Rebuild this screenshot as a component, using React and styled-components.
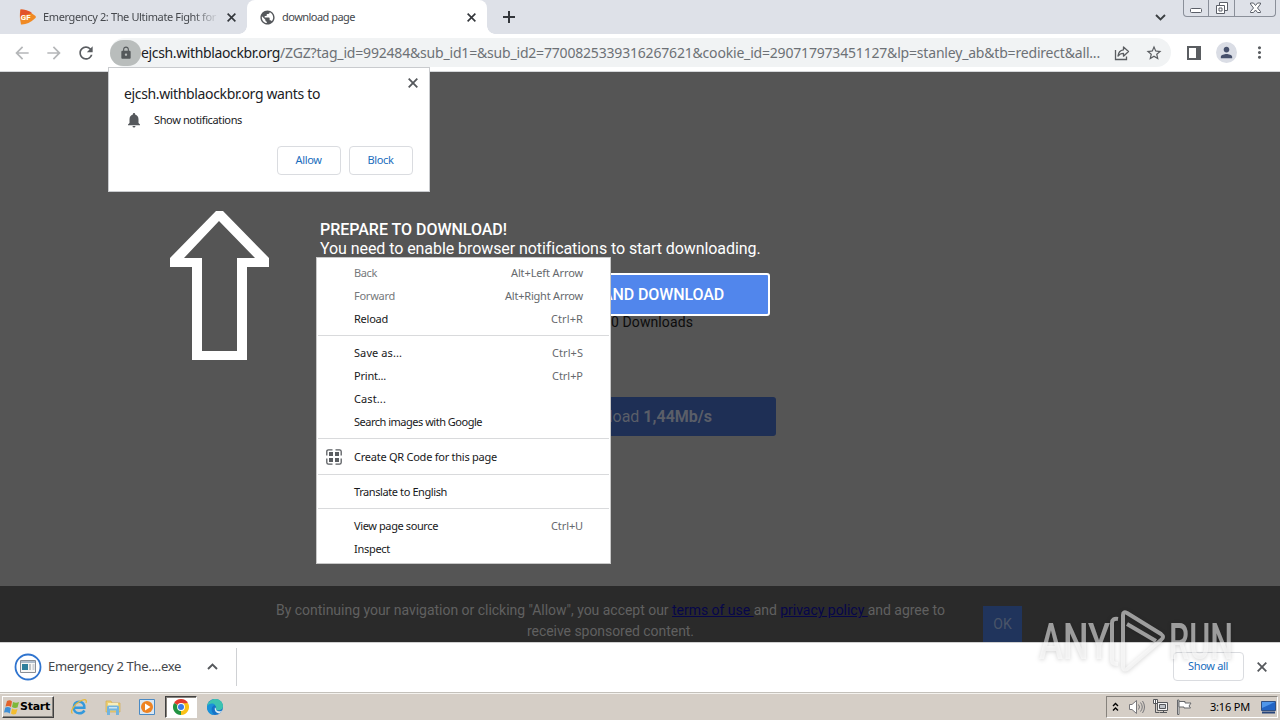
import React, { useLayoutEffect, useRef } from "react"
import styled, { createGlobalStyle, css } from "styled-components"
import {
  MdArrowBack,
  MdArrowForward,
  MdLock,
  MdMoreVert,
  MdNotifications,
  MdPerson,
  MdPublic,
  MdRefresh,
  MdStarBorder,
} from "react-icons/md"

const uiFont = `"Noto Sans", "DejaVu Sans", sans-serif`
const pageFont = `Roboto, "Liberation Sans", sans-serif`

const GlobalStyle = createGlobalStyle`
  * {
    box-sizing: border-box;
  }
  body {
    margin: 0;
    overflow: hidden;
    font-family: ${uiFont};
    font-size: 11px;
    color: #202124;
  }
  svg {
    display: block;
    flex: none;
  }
`

const Screen = styled.div`
  position: relative;
  display: flex;
  flex-direction: column;
  width: 1280px;
  height: 720px;
  overflow: hidden;
`

/* Tab strip */

const TabStrip = styled.header`
  display: flex;
  height: 34px;
  background: #dee1e8;
`

const Tab = styled.div`
  position: relative;
  display: flex;
  align-items: center;
  width: ${props => (props.$active ? 240 : 247)}px;
  padding: 0 11px 0 ${props => (props.$active ? 12 : 19)}px;
  color: #45484d;

  ${props =>
    props.$active &&
    css`
      background: #fff;
      border-radius: 8px 8px 0 0;

      &::before,
      &::after {
        content: "";
        position: absolute;
        bottom: 0;
        width: 8px;
        height: 8px;
      }
      &::before {
        left: -8px;
        background: radial-gradient(circle at 0 0, transparent 7.5px, #fff 8px);
      }
      &::after {
        right: -8px;
        background: radial-gradient(
          circle at 100% 0,
          transparent 7.5px,
          #fff 8px
        );
      }
    `}
`

const TabTitle = styled.div`
  flex: 1;
  margin-left: ${props => props.$gap}px;
  overflow: hidden;
  line-height: 18px;
  ${props =>
    props.$fade &&
    css`
      mask-image: linear-gradient(90deg, #000 150px, transparent 176px);
    `}
`

const NewTab = styled.div`
  display: flex;
  flex: 1;
  align-items: center;
  padding-left: 16px;
`

const TabSearch = styled.div`
  display: flex;
  align-items: center;
  margin-right: 17px;
`

const WindowButtons = styled.div`
  display: flex;
  width: 93px;
  height: 17px;
  margin-right: 4px;
  border: 1px solid #8a8f99;
  border-top: 0;
  border-radius: 0 0 4px 4px;
`

const WindowButton = styled.div`
  display: flex;
  justify-content: center;
  width: ${props => props.$width}px;
  & + & {
    border-left: 1px solid #8a8f99;
  }
`

/* Toolbar */

const Toolbar = styled.div`
  display: flex;
  align-items: center;
  height: 38px;
  padding-left: 12px;
  background: #fff;
  border-bottom: 1px solid #d5d7da;
`

const ToolButton = styled.div`
  display: flex;
  flex: none;
  align-items: center;
  justify-content: center;
  width: 20px;
  margin-right: ${props => props.$gap || 0}px;
  color: ${props => (props.$disabled ? "#b5b7b9" : "#5a5d61")};
`

const AddressBar = styled.div`
  display: flex;
  flex: none;
  align-items: center;
  width: 1061px;
  height: 29px;
  margin-right: 13px;
  border-radius: 14.5px;
  background: #f1f3f4;
`

const SiteChip = styled.div`
  display: flex;
  align-items: center;
  justify-content: center;
  width: 31px;
  height: 26px;
  border-radius: 13px;
  background: #b9bdbc;
  color: #54585a;
`

const Url = styled.div`
  display: flex;
  flex: 1;
  font-size: 14px;
  line-height: 20px;
  color: #6d7176;
`

const Host = styled.span`
  color: #202124;
`

const Avatar = styled.div`
  display: flex;
  flex: none;
  align-items: center;
  justify-content: center;
  width: 21px;
  height: 21px;
  margin: 0 12px;
  border-radius: 50%;
  background: #dadde5;
  color: #46506b;
`

/* Web page */

const Page = styled.main`
  display: flex;
  flex: 1;
  align-items: flex-start;
  padding: 139px 0 0 170px;
  background: #555;
  font-family: ${pageFont};
  font-size: 16px;
`

const Prompt = styled.section`
  width: 456px;
  margin: 9px 0 0 51px;
  color: #fff;
  line-height: 19px;
`

const PromptTitle = styled.div`
  font-weight: 500;
`

const AllowButton = styled.div`
  display: flex;
  align-items: center;
  justify-content: flex-end;
  width: 450px;
  height: 43px;
  margin-top: 15px;
  padding-right: 44px;
  border: 2px solid #fff;
  border-radius: 3px;
  background: #5186ec;
  font-weight: 500;
`

const DownloadCount = styled.div`
  margin-top: -3px;
  padding-right: 83px;
  color: #0c0c0c;
  font-size: 14px;
  text-align: right;
`

const SpeedButton = styled.div`
  display: flex;
  align-items: center;
  justify-content: flex-end;
  height: 39px;
  margin-top: 65px;
  padding-right: 64px;
  border-radius: 3px;
  background: #1e2f55;
  color: #5a5e68;
  white-space: pre;

  b {
    font-weight: 700;
  }
`

const CookieBar = styled.div`
  display: flex;
  height: 56px;
  padding: 14px 0 0 270px;
  overflow: hidden;
  background: #2a2a2a;
  color: #606060;
  font-family: ${pageFont};
  font-size: 14px;
`

const CookieText = styled.div`
  display: flex;
  flex-direction: column;
  align-items: center;
  width: 681px;
  line-height: 21px;

  a {
    color: #06064a;
    text-decoration: underline;
    white-space: pre;
  }
`

const CookieOk = styled.div`
  width: 39px;
  height: 40px;
  margin: 6px 0 0 32px;
  background: #20345c;
  color: #4a5468;
  line-height: 37px;
  text-align: center;
`

/* Downloads */

const Shelf = styled.footer`
  display: flex;
  align-items: center;
  height: 50px;
  padding: 0 0 2px 14px;
  background: #fff;
  border-top: 1px solid #d0d0d0;
`

const DownloadItem = styled.div`
  display: flex;
  align-items: center;
  width: 223px;
  height: 38px;
  border-right: 1px solid #cfd1d4;
  color: #45484c;
  font-size: 13px;
`

const FileName = styled.div`
  width: 133px;
  margin: 0 26px 1px 6px;
`

const ShelfActions = styled.div`
  display: flex;
  flex: 1;
  align-items: center;
  justify-content: flex-end;
  gap: 13px;
  padding-right: 13px;
`

const OutlineButton = styled.div`
  display: flex;
  align-items: center;
  justify-content: center;
  width: ${props => props.$width}px;
  height: 29px;
  padding: 0 1px 3px 0;
  border: 1px solid #dadce0;
  border-radius: 4px;
  color: #1a6dbd;
`

/* Taskbar */

const Taskbar = styled.div`
  display: flex;
  align-items: center;
  height: 28px;
  padding: 0 2px;
  border-top: 1px solid #c4c1bb;
  box-shadow: inset 0 1px #f4f2ee;
  background: #d5cec6;
`

const StartButton = styled.div`
  display: flex;
  align-items: center;
  width: 52px;
  height: 22px;
  margin-right: 9px;
  padding-left: 1px;
  border: 1px solid;
  border-color: #fff #404040 #404040 #fff;
  box-shadow: inset -1px -1px #86827c;
  color: #000;
  font-family: "DejaVu Sans", sans-serif;
  font-size: 11px;
  font-weight: 700;
`

const TaskButton = styled.div`
  display: flex;
  align-items: center;
  justify-content: center;
  width: 32px;
  height: 22px;
  margin-right: 2px;
  ${props =>
    props.$active &&
    css`
      border: 1px solid;
      border-color: #404040 #fff #fff #404040;
      box-shadow: inset 1px 1px #86827c;
      background: #fff;
    `}
`

const Tray = styled.div`
  display: flex;
  align-items: center;
  width: 172px;
  height: 22px;
  margin-left: auto;
  border: 1px solid;
  border-color: #86827c #fff #fff #86827c;
  color: #000;
`

const TraySlot = styled.div`
  margin-left: ${props => props.$gap}px;
`

/* Things that float above the browser */

const PermissionPopup = styled.div`
  position: absolute;
  top: 67px;
  left: 108px;
  width: 322px;
  height: 125px;
  padding: 17px 16px 0 15px;
  border: 1px solid #c9cbce;
  background: #fff;
`

const PopupTitle = styled.div`
  height: 20px;
  font-size: 14px;
  line-height: 18px;
`

const PopupClose = styled.div`
  position: absolute;
  top: 10px;
  right: 11px;
`

const PopupRow = styled.div`
  display: flex;
  align-items: center;
  height: 30px;
  gap: 11px;
  padding-left: 1px;

  svg {
    color: #55585c;
  }
  span {
    margin-bottom: 2px;
  }
`

const PopupButtons = styled.div`
  display: flex;
  justify-content: flex-end;
  gap: 8px;
  margin-top: 11px;
`

const Menu = styled.div`
  position: absolute;
  top: 257px;
  left: 316px;
  width: 295px;
  padding: 3px 0;
  border: 1px solid #c8c8c8;
  background: #fff;
`

const MenuItem = styled.div`
  display: flex;
  align-items: center;
  height: ${props => (props.$icon ? 25 : 23)}px;
  padding-right: 27px;
  color: ${props => (props.$disabled ? "#76787b" : "#18191b")};
`

const MenuIcon = styled.div`
  width: 37px;
  padding-left: 9px;
`

const Shortcut = styled.span`
  margin-left: auto;
  color: #66696d;
`

const Separator = styled.div`
  height: 1px;
  margin: 5px 1px;
  background: #d9dadc;
`

const Watermark = styled.svg`
  position: absolute;
  top: 604px;
  left: 1030px;
  filter: drop-shadow(0 1px 2px rgba(0, 0, 0, 0.3));
`

const Fitted = styled.span`
  display: inline-block;
  white-space: pre;
`

// Spreads the letters so that the label takes the given width.
const Fit = ({ width, children }) => {
  const ref = useRef(null)
  useLayoutEffect(() => {
    const el = ref.current
    el.style.letterSpacing = "0px"
    const natural = el.getBoundingClientRect().width
    el.style.letterSpacing = `${(width - natural) / el.textContent.length}px`
  }, [width, children])
  return <Fitted ref={ref}>{children}</Fitted>
}

const Cross = ({ size = 10, color = "#55585c" }) => (
  <svg width={size} height={size} viewBox="0 0 10 10" stroke={color} strokeWidth="1.8">
    <path d="m.7.7 8.600 8.600M9.300.7.7 9.300" />
  </svg>
)

const Plus = () => (
  <svg width="12" height="12" viewBox="0 0 12 12" stroke="#33363b" strokeWidth="2">
    <path d="M6 0v12M0 6h12" />
  </svg>
)

const Chevron = ({ up, color = "#3c4043" }) => (
  <svg width="11" height="7" viewBox="0 0 11 7" fill="none" stroke={color} strokeWidth="1.900">
    <path d={up ? "m1 6 4.500-4.500L10 6" : "m1 1 4.500 4.500L10 1"} />
  </svg>
)

const GameFavicon = () => (
  <svg width="18" height="18" viewBox="0 0 18 18">
    <path d="M1.500 1.500Q8 1 16.500 8q.8 1 0 2Q9 17 2 16.500Q0 8 1.500 1.500z" fill="#f08a24" />
    <path d="M1.500 1.500Q8 1 13 5L1 9z" fill="#e2522b" />
    <text x="1.800" y="12" fill="#fff" fontFamily="Roboto" fontSize="8" fontWeight="700">
      GF
    </text>
  </svg>
)

const ShareIcon = () => (
  <svg width="18" height="18" viewBox="0 0 18 18" fill="none" stroke="#5a5d61" strokeWidth="1.300">
    <path d="M2.500 6v9.500h11V12.500" />
    <path d="M10.500 3v2.800C7 6.300 5.300 8.500 5 12c1.400-1.900 3-2.700 5.500-2.700v2.900L15.500 7.500z" strokeLinejoin="round" />
  </svg>
)

const PanelIcon = () => (
  <svg width="14" height="14" viewBox="0 0 14 14">
    <path fill="#5a5d61" fillRule="evenodd" d="M0 0h14v14H0zM2 2v10h7V2z" />
  </svg>
)

const MinimizeGlyph = () => (
  <svg width="13" height="14" viewBox="0 0 13 14">
    <rect x=".5" y="8.500" width="11" height="4" rx="1" fill="#fff" stroke="#5b5f68" />
  </svg>
)

const RestoreGlyph = () => (
  <svg width="14" height="15" viewBox="0 0 14 15" fill="#fff" stroke="#5b5f68">
    <path d="M4.500 2.500h8v8h-8z" />
    <path d="M1.500 5.500h8v8h-8z" />
    <path d="M4 8h3v3H4z" />
  </svg>
)

const CloseGlyph = () => (
  <svg width="13" height="15" viewBox="0 0 13 15">
    <path
      d="M1.500 3h3l2 2.500 2-2.500h3v1L8.500 8l3 3.500v1h-3l-2-2.500-2 2.500h-3v-1l3-3.500-3-4z"
      fill="#fff"
      stroke="#5b5f68"
    />
  </svg>
)

const UpArrow = () => (
  <svg width="99" height="149" viewBox="0 0 99 149">
    <path
      fill="#fff"
      fillRule="evenodd"
      d="M46 0h7l46 47v9H77v93H22V56H0v-9zM49 10 14 47h18v93h35V47h18z"
    />
  </svg>
)

const QrIcon = () => (
  <svg width="16" height="16" viewBox="0 0 16 16">
    <path
      fill="none"
      stroke="#5a5d61"
      strokeWidth="1.300"
      d="M6.500.8H2.500Q.8.8.8 2.500v4M9.500.8h4q1.700 0 1.700 1.700v4M.8 9.500v4q0 1.700 1.700 1.700h4M15.200 9.500v4q0 1.700-1.700 1.700h-4"
    />
    <path fill="#5a5d61" d="M3 3h4v4H3zM9 3h4v4H9zM3 9h4v4H3zM9 9h4v4H9z" />
  </svg>
)

const ExeIcon = () => (
  <svg width="28" height="28" viewBox="0 0 28 28">
    <circle cx="14" cy="14" r="12.500" fill="#fff" stroke="#2f74cf" strokeWidth="1.800" />
    <path d="M6.500 7.500h15v12h-15z" fill="#f7f7f5" stroke="#8a8f96" />
    <path d="M7 8h14v2H7z" fill="#aebccb" />
    <path d="M8 11h6v6H8z" fill="#2f7f9d" />
    <path d="M15 12h2M15 14h2M15 16h2" stroke="#8a8f96" />
    <path d="M18.500 11h2v6h-2z" fill="#ccd1d6" />
  </svg>
)

const WindowsFlag = () => (
  <svg width="16" height="16" viewBox="0 0 16 16">
    <path d="M3 2q3-1.500 5 .5L7 8Q5 6.500 1.500 7.500z" fill="#e2622b" />
    <path d="M9 3q3 1.500 6 0l-1.500 5.500Q10.500 9.500 8 8z" fill="#7db83a" />
    <path d="M1.300 8.500q3-1 5.500.5l-1 5.500Q3.500 12.500 0 13.500z" fill="#3f8fd6" />
    <path d="M8 9.500q2.500 1.500 5.500.5L12 15q-3 1-5-.5z" fill="#f4bd2f" />
  </svg>
)

const IeIcon = () => (
  <svg width="18" height="18" viewBox="0 0 18 18" fill="none">
    <path d="M14.500 12.500Q12.500 15.500 9 15.300C5.500 15 3.600 12.500 3.700 9.500 3.900 6 6 3.700 9.200 3.700c3.300 0 5.300 2.500 5.200 6H5" stroke="#3399dc" strokeWidth="2.400" />
    <path d="M2.500 15.500C-.5 14 4 6.500 9.500 3.500 14 1 17.500.8 16 5" stroke="#e5b93c" strokeWidth="1.300" />
  </svg>
)

const ExplorerIcon = () => (
  <svg width="18" height="18" viewBox="0 0 18 18">
    <path d="M2 3h5l1 2h8v9H2z" fill="#edcf72" stroke="#d2ad50" strokeWidth=".7" />
    <path d="M4 5h10v4H4z" fill="#f9eeb9" />
    <path d="M3 9q0-1.500 1.500-1.500h9Q15 7.500 15 9v8h-3v-4.500H6V17H3z" fill="#72b4de" />
    <path d="M5 9h8v1.500H5z" fill="#c6e5f5" />
  </svg>
)

const PlayerIcon = () => (
  <svg width="18" height="18" viewBox="0 0 18 18">
    <path d="M1.500 1.500h15v15h-15z" fill="#d9e7f3" stroke="#4a8ac4" />
    <circle cx="9" cy="9" r="6" fill="#ee8322" />
    <path d="m7 5.500 5.500 3.500L7 12.500z" fill="#fff" />
  </svg>
)

const ChromeIcon = () => (
  <svg width="16" height="16" viewBox="0 0 16 16">
    <path d="M8 8 1.070 4A8 8 0 0 1 14.930 4z" fill="#e33b2e" />
    <path d="M8 8 14.930 4A8 8 0 0 1 8 16z" fill="#fbc116" />
    <path d="M8 8v8A8 8 0 0 1 1.070 4z" fill="#229342" />
    <path d="M8 4.200h6.900L8 16l3.400-6z" fill="#fbc116" />
    <circle cx="8" cy="8" r="3.900" fill="#fff" />
    <circle cx="8" cy="8" r="3" fill="#3a7be8" />
  </svg>
)

const EdgeIcon = () => (
  <svg width="18" height="18" viewBox="0 0 18 18">
    <circle cx="9" cy="9" r="8" fill="#1572c8" />
    <path d="M1 8.500C2 3 6 1 9.500 1 14 1 17 4.500 17 8c0 3-2.300 4.200-4.500 4.200-1.500 0-2.700-.5-2.500-1.300.8-2.500-1-4.400-3.500-4.400C4 6.500 2 7.500 1 8.500z" fill="#3cc3b0" />
    <path d="M1 8.500C2.500 5.500 7 4.500 9 7 5 8 4.500 13 8 16.800 4 17 .6 13.500 1 8.500z" fill="#1a92d9" />
    <path d="M10 10.800c-.2 2.800 3.500 3 6.300 1.600-.7 1.200-1.800 2.400-3 3.200C10 15.200 8 12.500 9 9.300z" fill="#dcecf2" />
  </svg>
)

const TrayChevrons = () => (
  <svg width="7" height="10" viewBox="0 0 7 10" fill="none" stroke="#000" strokeWidth="1.400">
    <path d="m1 4 2.500-2.500L6 4M1 8.500 3.500 6 6 8.500" />
  </svg>
)

const SpeakerIcon = () => (
  <svg width="17" height="16" viewBox="0 0 17 16" stroke="#77777a" fill="none">
    <path d="M1.500 5.500H4L8.500 1.500v13L4 10.500H1.500z" fill="#fff" />
    <path d="M10.500 5.500q2 2.500 0 5M12.500 3.500q3.500 4.500 0 9M14.500 2q4 6 0 12" />
  </svg>
)

const NetworkIcon = () => (
  <svg width="17" height="16" viewBox="0 0 17 16" stroke="#55575a">
    <path d="M5.500 3.500h10v8h-10z" fill="#f5f5f5" />
    <path d="M7.500 5.500h6v4h-6z" fill="#bfc3c8" />
    <path d="M1.500.5h4v4h-4z" fill="#fff" />
    <path d="M8 13.500h7M11.500 11.500v2M3.500.5v4M3.500 4.500v9h4" fill="none" />
  </svg>
)

const FlagIcon = () => (
  <svg width="17" height="16" viewBox="0 0 17 16" stroke="#66686b">
    <path d="M1.500 1v14.500h1.500V1z" fill="#fff" />
    <path d="M3 2.500h6v1.500h6l-2 3 1.500 2H8V8H3z" fill="#fff" />
  </svg>
)

const DesktopIcon = () => (
  <svg width="15" height="14" viewBox="0 0 15 14">
    <path d="M.5 1.500h14v9H.5z" fill="#2264c4" stroke="#305084" />
    <path d="M1 2h13L1 8z" fill="#4f96ea" />
    <path d="M1 11.500h13v2H1z" fill="#27457a" />
  </svg>
)

const menuGroups = [
  [
    { label: "Back", width: 23, keys: "Alt+Left Arrow", keysWidth: 72, disabled: true },
    { label: "Forward", width: 41, keys: "Alt+Right Arrow", keysWidth: 78, disabled: true },
    { label: "Reload", width: 34, keys: "Ctrl+R", keysWidth: 32 },
  ],
  [
    { label: "Save as...", width: 48, keys: "Ctrl+S", keysWidth: 31 },
    { label: "Print...", width: 32, keys: "Ctrl+P", keysWidth: 31 },
    { label: "Cast...", width: 32 },
    { label: "Search images with Google", width: 128 },
  ],
  [{ label: "Create QR Code for this page", width: 143, icon: <QrIcon /> }],
  [{ label: "Translate to English", width: 93 }],
  [
    { label: "View page source", width: 84, keys: "Ctrl+U", keysWidth: 32 },
    { label: "Inspect", width: 36 },
  ],
]

const ContextMenu = () => (
  <Menu>
    {menuGroups.map((group, i) => (
      <React.Fragment key={group[0].label}>
        {i > 0 && <Separator />}
        {group.map(item => (
          <MenuItem key={item.label} $disabled={item.disabled} $icon={!!item.icon}>
            <MenuIcon>{item.icon}</MenuIcon>
            <Fit width={item.width}>{item.label}</Fit>
            {item.keys && (
              <Shortcut>
                <Fit width={item.keysWidth}>{item.keys}</Fit>
              </Shortcut>
            )}
          </MenuItem>
        ))}
      </React.Fragment>
    ))}
  </Menu>
)

const Permission = () => (
  <PermissionPopup>
    <PopupTitle>
      <Fit width={196}>ejcsh.withblaockbr.org wants to</Fit>
    </PopupTitle>
    <PopupClose>
      <Cross />
    </PopupClose>
    <PopupRow>
      <MdNotifications size={18} />
      <Fit width={88}>Show notifications</Fit>
    </PopupRow>
    <PopupButtons>
      <OutlineButton $width={64}>
        <Fit width={26}>Allow</Fit>
      </OutlineButton>
      <OutlineButton $width={64}>
        <Fit width={26}>Block</Fit>
      </OutlineButton>
    </PopupButtons>
  </PermissionPopup>
)

const App = () => (
  <Screen>
    <GlobalStyle />
    <TabStrip>
      <Tab>
        <GameFavicon />
        <TabTitle $gap={6} $fade>
          <Fit width={173}>Emergency 2: The Ultimate Fight for</Fit>
        </TabTitle>
        <Cross size={9} color="#33363b" />
      </Tab>
      <Tab $active>
        <MdPublic size={17} color="#54575b" />
        <TabTitle $gap={6}>
          <Fit width={73}>download page</Fit>
        </TabTitle>
        <Cross size={9} color="#33363b" />
      </Tab>
      <NewTab>
        <Plus />
      </NewTab>
      <TabSearch>
        <Chevron />
      </TabSearch>
      <WindowButtons>
        <WindowButton $width={24}>
          <MinimizeGlyph />
        </WindowButton>
        <WindowButton $width={26}>
          <RestoreGlyph />
        </WindowButton>
        <WindowButton $width={41}>
          <CloseGlyph />
        </WindowButton>
      </WindowButtons>
    </TabStrip>

    <Toolbar>
      <ToolButton $gap={12} $disabled>
        <MdArrowBack size={20} />
      </ToolButton>
      <ToolButton $gap={12} $disabled>
        <MdArrowForward size={20} />
      </ToolButton>
      <ToolButton $gap={14}>
        <MdRefresh size={20} />
      </ToolButton>
      <AddressBar>
        <SiteChip>
          <MdLock size={14} />
        </SiteChip>
        <Url>
          <Host>
            <Fit width={139}>ejcsh.withblaockbr.org</Fit>
          </Host>
          <Fit width={820}>
            /ZGZ?tag_id=992484&sub_id1=&sub_id2=7700825339316267621&cookie_id=290717973451127&lp=stanley_ab&tb=redirect&all...
          </Fit>
        </Url>
        <ToolButton $gap={12}>
          <ShareIcon />
        </ToolButton>
        <ToolButton $gap={7}>
          <MdStarBorder size={18} />
        </ToolButton>
      </AddressBar>
      <ToolButton>
        <PanelIcon />
      </ToolButton>
      <Avatar>
        <MdPerson size={17} />
      </Avatar>
      <ToolButton>
        <MdMoreVert size={19} />
      </ToolButton>
    </Toolbar>

    <Page>
      <UpArrow />
      <Prompt>
        <PromptTitle>
          <Fit width={187}>PREPARE TO DOWNLOAD!</Fit>
        </PromptTitle>
        <Fit width={440}>
          You need to enable browser notifications to start downloading.
        </Fit>
        <AllowButton>
          <Fit width={122}>AND DOWNLOAD</Fit>
        </AllowButton>
        <DownloadCount>
          <Fit width={82}>0 Downloads</Fit>
        </DownloadCount>
        <SpeedButton>
          Download <b>1,44Mb/s</b>
        </SpeedButton>
      </Prompt>
    </Page>

    <CookieBar>
      <CookieText>
        <Fit width={669}>
          By continuing your navigation or clicking "Allow", you accept our{" "}
          <a>terms of use </a>and <a>privacy policy </a>and agree to
        </Fit>
        <Fit width={167}>receive sponsored content.</Fit>
      </CookieText>
      <CookieOk>OK</CookieOk>
    </CookieBar>

    <Shelf>
      <DownloadItem>
        <ExeIcon />
        <FileName>
          <Fit width={133}>Emergency 2 The....exe</Fit>
        </FileName>
        <Chevron up color="#55585c" />
      </DownloadItem>
      <ShelfActions>
        <OutlineButton $width={71}>
          <Fit width={40}>Show all</Fit>
        </OutlineButton>
        <Cross />
      </ShelfActions>
    </Shelf>

    <Taskbar>
      <StartButton>
        <WindowsFlag />
        <Fit width={30}>Start</Fit>
      </StartButton>
      <TaskButton>
        <IeIcon />
      </TaskButton>
      <TaskButton>
        <ExplorerIcon />
      </TaskButton>
      <TaskButton>
        <PlayerIcon />
      </TaskButton>
      <TaskButton $active>
        <ChromeIcon />
      </TaskButton>
      <TaskButton>
        <EdgeIcon />
      </TaskButton>
      <Tray>
        <TraySlot $gap={5}>
          <TrayChevrons />
        </TraySlot>
        <TraySlot $gap={9}>
          <SpeakerIcon />
        </TraySlot>
        <TraySlot $gap={7}>
          <NetworkIcon />
        </TraySlot>
        <TraySlot $gap={7}>
          <FlagIcon />
        </TraySlot>
        <TraySlot $gap={17}>
          <Fit width={40}>3:16 PM</Fit>
        </TraySlot>
        <TraySlot $gap={11}>
          <DesktopIcon />
        </TraySlot>
      </Tray>
    </Taskbar>

    <Permission />
    <ContextMenu />
    <Watermark width="210" height="76" viewBox="0 0 210 76">
      <g
        fill="#fff"
        fillOpacity="0.55"
        fontFamily="Roboto, sans-serif"
        fontSize="50"
        fontWeight="500"
      >
        <text x="9" y="55" textLength="71" lengthAdjust="spacingAndGlyphs">
          ANY
        </text>
        <text x="139" y="55" textLength="64" lengthAdjust="spacingAndGlyphs">
          RUN
        </text>
      </g>
      <g
        fill="none"
        stroke="#fff"
        strokeOpacity="0.55"
        strokeWidth="4"
        strokeLinejoin="round"
      >
        <path d="M88 15q-6-1-6 4v37q0 4 6 4" />
        <path d="M93 56V11q0-4 4-2l34 21q4 3 0 6L97 65q-4 2-4-3v-6" />
        <path d="m97 20 29 17" />
      </g>
    </Watermark>
  </Screen>
)

export default App
